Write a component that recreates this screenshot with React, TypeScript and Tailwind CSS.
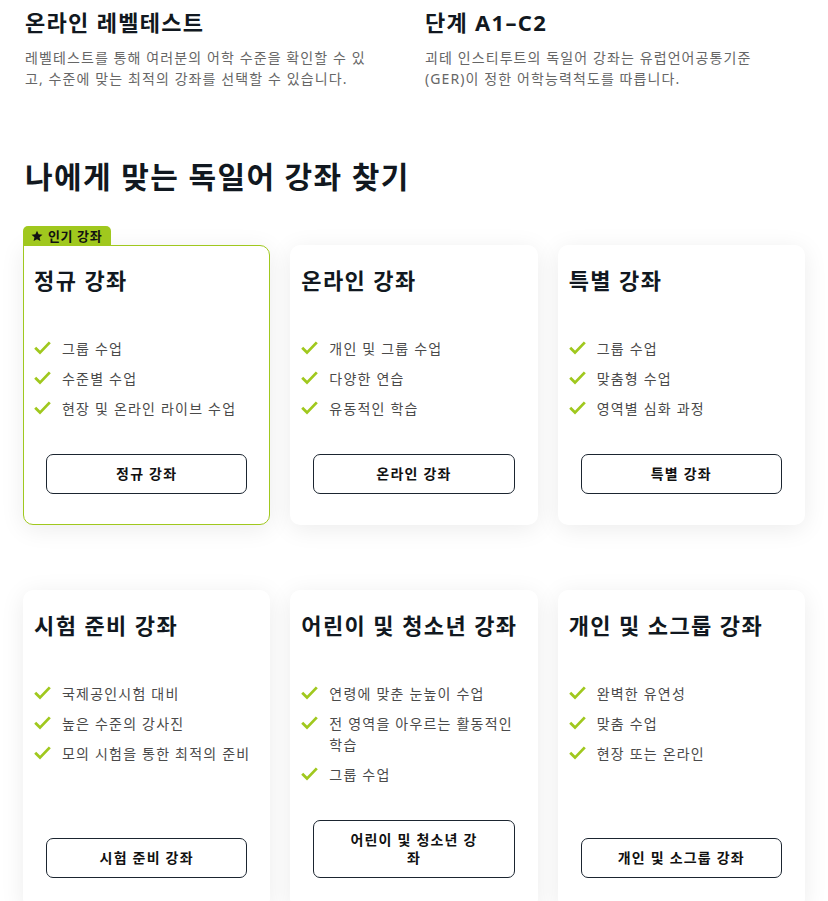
import React from "react";

const font = '"Noto Sans", "Noto Sans CJK KR", sans-serif';

type Course = { title: string; items: string[]; button: string; popular?: boolean };

const row1: Course[] = [
  { title: "정규 강좌", items: ["그룹 수업", "수준별 수업", "현장 및 온라인 라이브 수업"], button: "정규 강좌", popular: true },
  { title: "온라인 강좌", items: ["개인 및 그룹 수업", "다양한 연습", "유동적인 학습"], button: "온라인 강좌" },
  { title: "특별 강좌", items: ["그룹 수업", "맞춤형 수업", "영역별 심화 과정"], button: "특별 강좌" },
];
const row2: Course[] = [
  { title: "시험 준비 강좌", items: ["국제공인시험 대비", "높은 수준의 강사진", "모의 시험을 통한 최적의 준비"], button: "시험 준비 강좌" },
  { title: "어린이 및 청소년 강좌", items: ["연령에 맞춘 눈높이 수업", "전 영역을 아우르는 활동적인 학습", "그룹 수업"], button: "어린이 및 청소년 강좌" },
  { title: "개인 및 소그룹 강좌", items: ["완벽한 유연성", "맞춤 수업", "현장 또는 온라인"], button: "개인 및 소그룹 강좌" },
];

function Check() {
  return (
    <svg width="17" height="14" viewBox="0 0 17 14" className="shrink-0 mt-[3px]">
      <path d="M1.2 6.8 L6 11.6 L15.8 1.4" fill="none" stroke="#a0c81e" strokeWidth="2.8" strokeLinecap="butt" strokeLinejoin="miter" />
    </svg>
  );
}

function Star() {
  return (
    <svg width="12" height="12" viewBox="0 0 24 24">
      <path d="M12 1.5l3.2 7.1 7.7.8-5.8 5.2 1.7 7.6L12 18.3 5.2 22.2l1.7-7.6L1.1 9.4l7.7-.8z" fill="#111" />
    </svg>
  );
}

function Card({ c }: { c: Course }) {
  return (
    <div
      className={
        "relative flex flex-col bg-white rounded-[10px] pt-[20px] px-[10px] pb-[30px] shadow-[0_4px_24px_rgba(0,0,0,0.08)] " +
        (c.popular ? "border border-[#a0c81e] rounded-tl-none" : "border border-transparent")
      }
    >
      {c.popular && (
        <div className="absolute left-[-1px] top-[-20px] h-[20px] w-[88px] bg-[#a0c81e] rounded-t-[5px] flex items-center gap-[5px] pl-[8px] text-[13px] font-semibold text-[#111] leading-none tracking-[0.6px]">
          <Star />
          <span>인기 강좌</span>
        </div>
      )}
      <h3 className="text-[22px] leading-[29px] font-bold text-[#111820] tracking-[1.4px]">{c.title}</h3>
      <ul className="mt-[43px] flex flex-col gap-[9px]">
        {c.items.map((it) => (
          <li key={it} className="flex gap-[11px] text-[14px] leading-[21px] text-[#4a4a4a] tracking-[1.2px]">
            <Check />
            <span>{it}</span>
          </li>
        ))}
      </ul>
      <div className="mt-auto pt-[35px] px-[12px]">
        <button className="w-full border border-[#1b2530] rounded-[7px] px-[32px] py-[10px] text-[14px] leading-[18px] font-bold text-[#111] bg-white tracking-[1.2px]">
          {c.button}
        </button>
      </div>
    </div>
  );
}

export default function App() {
  return (
    <div className="bg-white w-[828px] min-h-[901px] overflow-hidden px-[23px] pt-[8px]" style={{ fontFamily: font }}>
      <div className="grid grid-cols-[355px_360px] gap-x-[45px] pl-[2px]">
        <div>
          <h2 className="text-[22px] leading-[29px] font-bold text-[#111820] tracking-[1.3px]">온라인 레벨테스트</h2>
          <p className="mt-[10px] text-[14px] leading-[21px] text-[#666] tracking-[1.1px]">
            레벨테스트를 통해 여러분의 어학 수준을 확인할 수 있고, 수준에 맞는 최적의 강좌를 선택할 수 있습니다.
          </p>
        </div>
        <div>
          <h2 className="text-[22px] leading-[29px] font-bold text-[#111820] tracking-[1.3px]">단계 A1–C2</h2>
          <p className="mt-[10px] text-[14px] leading-[21px] text-[#666] tracking-[1.1px]">
            괴테 인스티투트의 독일어 강좌는 유럽언어공통기준 (GER)이 정한 어학능력척도를 따릅니다.
          </p>
        </div>
      </div>
      <h1 className="mt-[68px] pl-[2px] text-[30px] leading-[40px] font-bold text-[#111820] tracking-[1.4px]">나에게 맞는 독일어 강좌 찾기</h1>
      <div className="mt-[48px] grid grid-cols-3 gap-x-[20px] gap-y-[65px]">
        {row1.map((c) => (
          <Card key={c.title} c={c} />
        ))}
        {row2.map((c) => (
          <Card key={c.title} c={c} />
        ))}
      </div>
    </div>
  );
}
